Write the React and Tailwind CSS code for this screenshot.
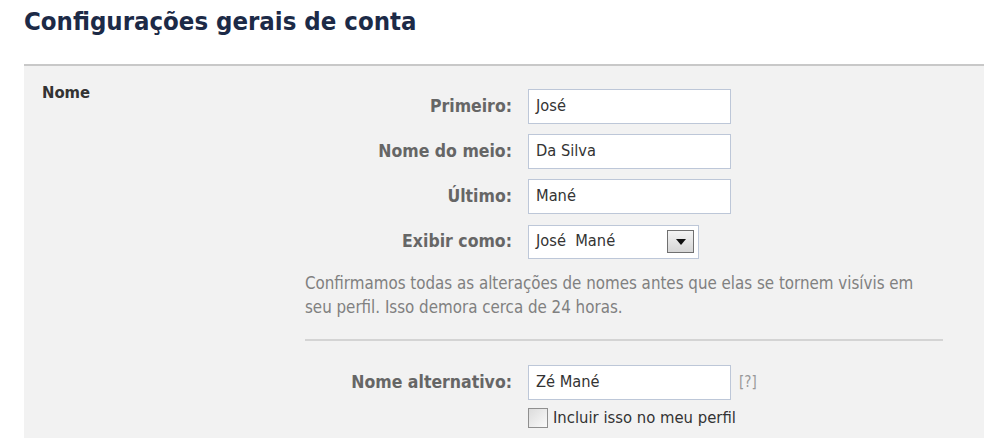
import React from "react";

const FIELDS = [
  { label: "Primeiro:", value: "José" },
  { label: "Nome do meio:", value: "Da Silva" },
  { label: "Último:", value: "Mané" },
];

function TextBox({ value }) {
  return (
    <div className="h-[35px] w-[203px] border border-[#bdc7d8] bg-white px-[7px] flex items-center text-[16.3px] text-[#333]">
      {value}
    </div>
  );
}

function Row({ label, children }) {
  return (
    <div className="flex items-center h-[35px]">
      <div className="w-[223px] pr-[16px] text-right font-bold text-[17.5px] text-[#666] whitespace-nowrap">
        {label}
      </div>
      {children}
    </div>
  );
}

export default function App() {
  return (
    <div className="h-[438px] bg-white font-['DejaVu_Sans_Condensed','DejaVu_Sans',sans-serif] overflow-hidden flex flex-col">
      {/* Header */}
      <h1 className="pl-[24px] pt-[3px] h-[64px] shrink-0 text-[25.5px] font-bold text-[#1c2a47] leading-[36px]">
        Configurações gerais de conta
      </h1>

      {/* Panel */}
      <div className="flex-1 ml-[24px] border-t-2 border-[#c8c8c8] bg-[#f2f2f2] flex pl-[18px] pt-[17px]">
        <div className="w-[263px] font-bold text-[16.5px] text-[#333] leading-[20px]">Nome</div>

        <div className="w-[638px] pt-[6px]">
          <div className="flex flex-col gap-[10px]">
            {FIELDS.map((f) => (
              <Row key={f.label} label={f.label}>
                <TextBox value={f.value} />
              </Row>
            ))}
            <Row label="Exibir como:">
              <div className="h-[34px] w-[171px] border border-[#bdc7d8] bg-white pl-[7px] pr-[4px] flex items-center justify-between text-[16.3px] text-[#333]">
                <span>José&nbsp;&nbsp;Mané</span>
                <div className="h-[23px] w-[27px] border border-[#707070] bg-gradient-to-b from-[#f4f4f4] to-[#d6d6d6] flex items-center justify-center">
                  <svg width="10" height="6" viewBox="0 0 10 6">
                    <path d="M0 0h10L5 6z" fill="#111" />
                  </svg>
                </div>
              </div>
            </Row>
          </div>

          <p className="mt-[12px] text-[16.8px] leading-[24px] text-[#808080] pr-[20px]">
            Confirmamos todas as alterações de nomes antes que elas se tornem visívis em seu perfil. Isso demora cerca de 24 horas.
          </p>

          <div className="mt-[20px] h-[2px] bg-[#d4d4d4]" />

          <div className="mt-[24px]">
            <Row label="Nome alternativo:">
              <TextBox value="Zé Mané" />
              <span className="ml-[8px] text-[15px] text-[#999]">[?]</span>
            </Row>
            <div className="mt-[6px] ml-[223px] flex items-center gap-[5px]">
              <div className="h-[20px] w-[20px] border border-[#8f8f8f] bg-gradient-to-br from-[#dcdcdc] to-[#fafafa]" />
              <span className="text-[16.5px] text-[#333]">Incluir isso no meu perfil</span>
            </div>
          </div>
        </div>
      </div>
    </div>
  );
}
